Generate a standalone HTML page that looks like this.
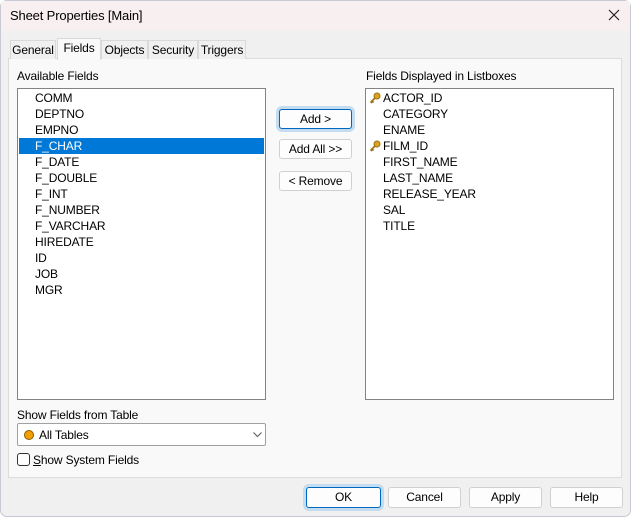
<!DOCTYPE html>
<html><head><style>
*{box-sizing:border-box;margin:0;padding:0}
body{width:631px;height:517px;overflow:hidden;background:#fff;font-family:"Liberation Sans",Arial,sans-serif;font-size:12px;color:#000;letter-spacing:-0.15px}
.win{position:absolute;left:0;top:0;width:631px;height:517px;box-shadow:inset 0 0 0 1px #c9c9d4;border-radius:7px;background:#f0f0f0;overflow:hidden}
.title{position:absolute;left:1px;top:1px;width:629px;height:30px;background:#f8eff0}
.title span{position:absolute;left:9px;top:7px;font-size:13px}
.x{position:absolute;left:606px;top:7px}
.a{position:absolute}
.tab{position:absolute;top:40px;height:19px;border:1px solid #d9d9d9;border-bottom:none;background:#f0f0f0;text-align:center;line-height:18px}
.panel{position:absolute;left:8px;top:58px;width:614px;height:420px;background:#f9f9f9;border:1px solid #dcdcdc}
.list{position:absolute;background:#fff;border:1px solid #838383}
.row{position:absolute;left:1px;height:16px;line-height:16px;padding-left:16px;width:245px}
.btn{position:absolute;background:#fdfdfd;border:1px solid #d0d0d0;border-radius:3px;text-align:center;line-height:18px}
.foc{border:1px solid #0067c0;box-shadow:0 0 0 3px #c4dcf0}
</style></head><body>
<div class="win">
<div class="title"><span>Sheet Properties [Main]</span>
<svg class="x" width="14" height="14" viewBox="0 0 14 14"><path d="M2 2L12 12M12 2L2 12" stroke="#222" stroke-width="1.2"/></svg></div>
<div class="panel"></div>
<div class="tab" style="left:10px;width:46px">General</div>
<div class="tab" style="left:101px;width:47px">Objects</div>
<div class="tab" style="left:148px;width:50px">Security</div>
<div class="tab" style="left:198px;width:48px">Triggers</div>
<div class="tab" style="left:57px;top:38px;width:44px;height:22px;background:#f9f9f9;z-index:2">Fields</div>

<div class="a" style="left:17px;top:69px">Available Fields</div>
<div class="a" style="left:366px;top:69px">Fields Displayed in Listboxes</div>

<div class="list" style="left:17px;top:88px;width:249px;height:312px">
<div class="row" style="top:1px">COMM</div>
<div class="row" style="top:17px">DEPTNO</div>
<div class="row" style="top:33px">EMPNO</div>
<div class="row" style="top:49px;background:#0078d7;color:#fff">F_CHAR</div>
<div class="row" style="top:65px">F_DATE</div>
<div class="row" style="top:81px">F_DOUBLE</div>
<div class="row" style="top:97px">F_INT</div>
<div class="row" style="top:113px">F_NUMBER</div>
<div class="row" style="top:129px">F_VARCHAR</div>
<div class="row" style="top:145px">HIREDATE</div>
<div class="row" style="top:161px">ID</div>
<div class="row" style="top:177px">JOB</div>
<div class="row" style="top:193px">MGR</div>
</div>

<div class="list" style="left:365px;top:88px;width:249px;height:312px">
<svg class="a" style="left:3px;top:3px" width="12" height="12" viewBox="0 0 12 12"><circle cx="8" cy="4" r="3" fill="#d9a420" stroke="#a07010"/><path d="M6 6L1.5 10.5M3 9l1.5 1.5M2 10l1 1" stroke="#a07010" stroke-width="1.6"/></svg>
<svg class="a" style="left:3px;top:51px" width="12" height="12" viewBox="0 0 12 12"><circle cx="8" cy="4" r="3" fill="#d9a420" stroke="#a07010"/><path d="M6 6L1.5 10.5M3 9l1.5 1.5M2 10l1 1" stroke="#a07010" stroke-width="1.6"/></svg>
<div class="row" style="top:1px">ACTOR_ID</div>
<div class="row" style="top:17px">CATEGORY</div>
<div class="row" style="top:33px">ENAME</div>
<div class="row" style="top:49px">FILM_ID</div>
<div class="row" style="top:65px">FIRST_NAME</div>
<div class="row" style="top:81px">LAST_NAME</div>
<div class="row" style="top:97px">RELEASE_YEAR</div>
<div class="row" style="top:113px">SAL</div>
<div class="row" style="top:129px">TITLE</div>
</div>

<div class="btn foc" style="left:279px;top:109px;width:73px;height:20px">Add &gt;</div>
<div class="btn" style="left:279px;top:139px;width:73px;height:20px">Add All &gt;&gt;</div>
<div class="btn" style="left:279px;top:171px;width:73px;height:20px">&lt; Remove</div>

<div class="a" style="left:17px;top:408px">Show Fields from Table</div>
<div class="a" style="left:17px;top:423px;width:249px;height:23px;background:#fff;border:1px solid #a0a0a0;border-radius:2px">
<div class="a" style="left:6px;top:6px;width:10px;height:10px;border-radius:50%;background:#f0a000;border:1px solid #8a5a00"></div>
<div class="a" style="left:21px;top:4px">All Tables</div>
<svg class="a" style="left:235px;top:8px" width="9" height="6" viewBox="0 0 9 6"><path d="M.5 .5L4.5 4.5L8.5 .5" fill="none" stroke="#555"/></svg>
</div>
<div class="a" style="left:17px;top:453px;width:13px;height:13px;border:1px solid #333;border-radius:3px;background:#fff"></div>
<div class="a" style="left:33px;top:453px"><u>S</u>how System Fields</div>

<div class="btn foc" style="left:306px;top:487px;width:75px;height:21px;line-height:19px">OK</div>
<div class="btn" style="left:388px;top:487px;width:73px;height:21px;line-height:19px">Cancel</div>
<div class="btn" style="left:469px;top:487px;width:73px;height:21px;line-height:19px">Apply</div>
<div class="btn" style="left:550px;top:487px;width:73px;height:21px;line-height:19px">Help</div>
</div>
</body></html>
